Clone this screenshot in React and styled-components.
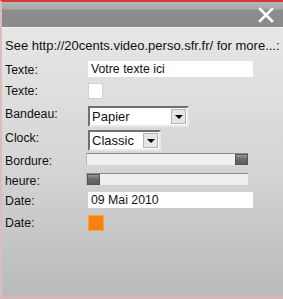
import React from 'react';
import styled, { createGlobalStyle } from 'styled-components';

const GlobalStyle = createGlobalStyle`
  html, body {
    margin: 0;
    padding: 0;
    background: #ffffff;
  }
  body {
    font-family: "Liberation Sans", Arial, sans-serif;
  }
`;

// Window frame
const Frame = styled.div`
  width: 283px;
  height: 299px;
  box-sizing: border-box;
  display: flex;
  flex-direction: column;
  border-top: 2px solid #d23a3a;
  border-left: 2px solid #dcbcbc;
  border-bottom: 3px solid #d8b4b6;
  overflow: hidden;
`;

const TitleBar = styled.div`
  height: 25px;
  flex-shrink: 0;
  display: flex;
  justify-content: flex-end;
  align-items: center;
  padding-right: 8px;
  background: linear-gradient(to bottom, #b6b6b6 0px, #a9a9a9 7px, #8d8d8d 8px, #8a8a8a 25px);
  border-bottom: 1px solid #f4f4f4;
`;

const CloseButton = styled.button`
  width: 18px;
  height: 18px;
  padding: 0;
  border: none;
  background: none;
  display: flex;
  align-items: center;
  justify-content: center;
  cursor: pointer;
`;

const Content = styled.div`
  flex: 1;
  padding: 10px 0 0 3px;
  background: linear-gradient(to bottom, #e6e6e6 0%, #d6d6d6 50%, #b8babb 100%);
  color: #111;
  font-size: 12px;
`;

const Notice = styled.div`
  height: 15px;
  line-height: 15px;
  font-size: 13px;
  white-space: nowrap;
  margin-bottom: 8px;
`;

const Form = styled.div`
  display: grid;
  grid-template-columns: 83px 1fr;
  grid-template-rows: 22px 23px 24px 23px 20px 19px 23px 16px;
  font-size: 12.3px;
`;

const Label = styled.div`
  line-height: 14px;
  padding-top: ${p => p.$top || 1}px;
`;

const Cell = styled.div`
  display: flex;
  align-items: flex-start;
  margin-left: ${p => p.$shift || 0}px;
`;

const TextInput = styled.div`
  width: 165px;
  height: 16px;
  line-height: 16px;
  background: #ffffff;
  padding-left: 3px;
  box-sizing: border-box;
  font-size: 12.3px;
`;

const CheckBox = styled.div`
  width: 15px;
  height: 16px;
  background: #ffffff;
  border: 1px solid #d0d0d0;
  box-sizing: border-box;
`;

const Select = styled.div`
  width: ${p => p.$width}px;
  height: 21px;
  box-sizing: border-box;
  display: flex;
  align-items: center;
  background: #ffffff;
  border-top: 2px solid #6f6f6f;
  border-left: 2px solid #6f6f6f;
  border-right: 2px solid #e8e8e8;
  border-bottom: 2px solid #e8e8e8;
  font-size: 13px;
`;

const SelectValue = styled.span`
  flex: 1;
  padding-left: 2px;
`;

const Arrow = styled.div`
  width: 15px;
  height: 15px;
  margin-right: 1px;
  background: #e6e6e6;
  border: 1px solid #b5b5b5;
  box-sizing: border-box;
  display: flex;
  align-items: center;
  justify-content: center;

  &::after {
    content: '';
    border-left: 4px solid transparent;
    border-right: 4px solid transparent;
    border-top: 4px solid #000;
  }
`;

const Track = styled.div`
  width: 162px;
  height: 12px;
  box-sizing: border-box;
  display: flex;
  justify-content: ${p => (p.$end ? 'flex-end' : 'flex-start')};
  background: #efefef;
  border-top: 1px solid #8a8a8a;
  border-left: 1px solid #b8b8b8;
`;

const Thumb = styled.div`
  width: 13px;
  height: 11px;
  background: linear-gradient(to bottom, #9a9a9a 0%, #6e6e6e 40%, #5e5e5e 100%);
  border: 1px solid #555;
  box-sizing: border-box;
`;

const Swatch = styled.div`
  width: 16px;
  height: 16px;
  background: #f7820f;
  border: 1px solid #f3a050;
  box-sizing: border-box;
`;

const App = () => (
  <>
    <GlobalStyle />
    <Frame>
      <TitleBar>
        <CloseButton title="Fermer">
          <svg width="16" height="16" viewBox="0 0 16 16">
            <path d="M2 2 L14 14 M14 2 L2 14" stroke="#ffffff" strokeWidth="2.6" strokeLinecap="square" />
          </svg>
        </CloseButton>
      </TitleBar>
      <Content>
        <Notice>See http://20cents.video.perso.sfr.fr/ for more...:</Notice>
        <Form>
          <Label $top={2}>Texte:</Label>
          <Cell><TextInput>Votre texte ici</TextInput></Cell>

          <Label>Texte:</Label>
          <Cell><CheckBox /></Cell>

          <Label $top={0}>Bandeau:</Label>
          <Cell>
            <Select $width={101}>
              <SelectValue>Papier</SelectValue>
              <Arrow />
            </Select>
          </Cell>

          <Label $top={1}>Clock:</Label>
          <Cell>
            <Select $width={73}>
              <SelectValue>Classic</SelectValue>
              <Arrow />
            </Select>
          </Cell>

          <Label $top={0}>Bordure:</Label>
          <Cell $shift={-2}>
            <Track $end><Thumb /></Track>
          </Cell>

          <Label $top={0}>heure:</Label>
          <Cell $shift={-2}>
            <Track><Thumb /></Track>
          </Cell>

          <Label $top={2}>Date:</Label>
          <Cell><TextInput>09 Mai 2010</TextInput></Cell>

          <Label $top={1}>Date:</Label>
          <Cell><Swatch /></Cell>
        </Form>
      </Content>
    </Frame>
  </>
);

export default App;
